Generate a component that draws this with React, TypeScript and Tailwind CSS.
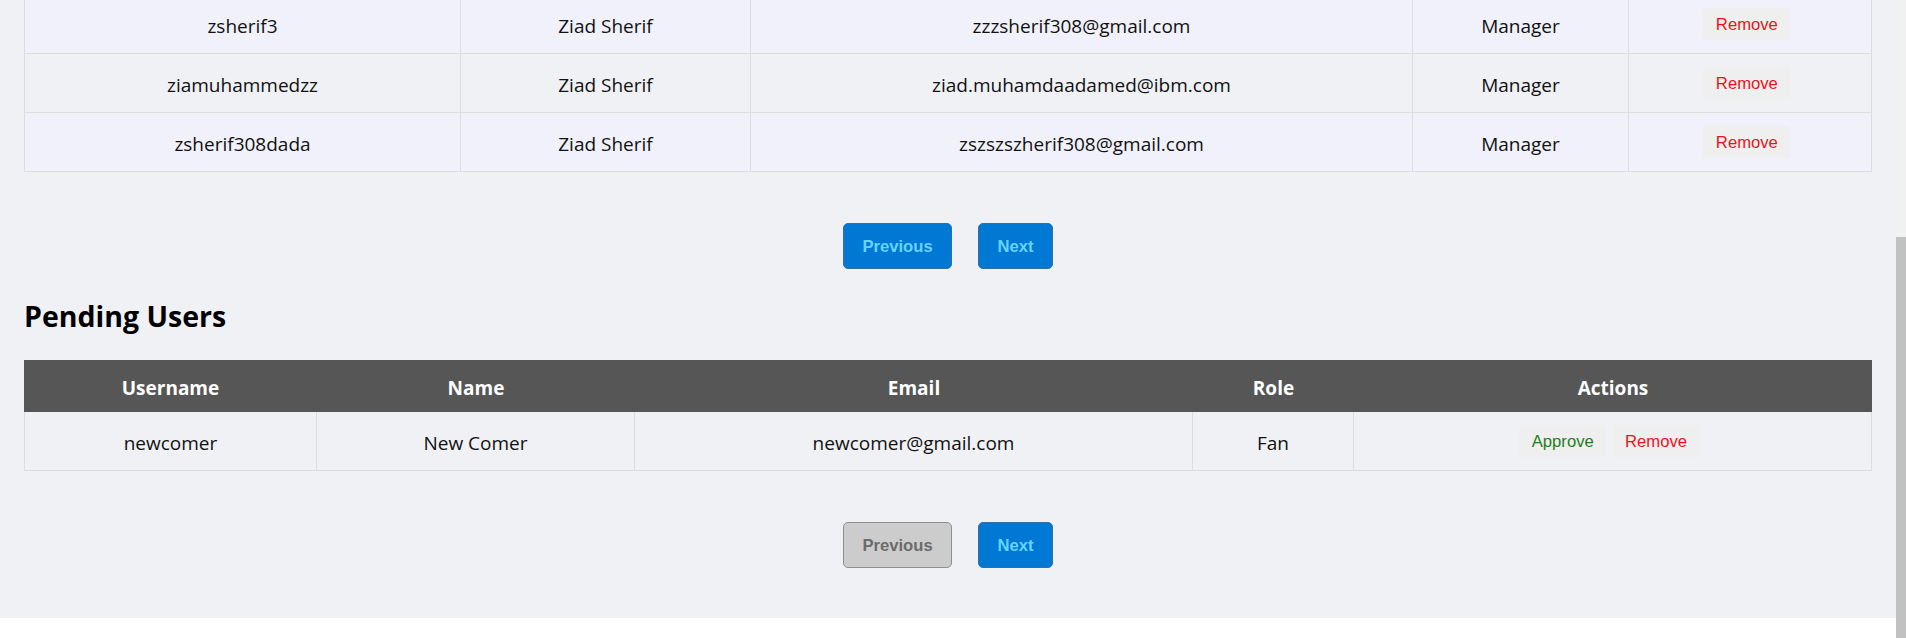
import React from "react";

const topRows = [
  { u: "zsherif3", n: "Ziad Sherif", e: "zzzsherif308@gmail.com", r: "Manager", striped: true },
  { u: "ziamuhammedzz", n: "Ziad Sherif", e: "ziad.muhamdaadamed@ibm.com", r: "Manager", striped: false },
  { u: "zsherif308dada", n: "Ziad Sherif", e: "zszszszherif308@gmail.com", r: "Manager", striped: true },
];

const cell = "flex items-center justify-center border-r border-[#dddddd]";
const textCell = "flex items-center justify-center border-r border-[#dddddd] pt-[5px]";
const headCell = "flex items-center justify-center pt-[4px]";

function ActionButton({ label, tone }: { label: string; tone: "red" | "green" }) {
  return (
    <button
      className={
        "h-[32px] px-[12.5px] mr-[6.25px] rounded-[3px] bg-[#efefef] text-[16.67px] leading-[19px] font-['Liberation_Sans',Arial,sans-serif] " +
        (tone === "red" ? "text-[#e8141a]" : "text-[#1e7d1e]")
      }
    >
      {label}
    </button>
  );
}

function Pagination({ prevDisabled }: { prevDisabled: boolean }) {
  return (
    <div className="flex justify-center gap-[26px] mt-[51px]">
      <button
        className={
          "h-[46px] px-[18.4px] rounded-[5px] border text-[16.67px] font-bold font-['Liberation_Sans',Arial,sans-serif] " +
          (prevDisabled
            ? "bg-[#cccccc] border-[#8f8f8f] text-[#6b6b6b]"
            : "bg-[#0078d4] border-[#336fa3] text-[#66d4ff]")
        }
      >
        Previous
      </button>
      <button className="h-[46px] px-[18.4px] rounded-[5px] border bg-[#0078d4] border-[#336fa3] text-[#66d4ff] text-[16.67px] font-bold font-['Liberation_Sans',Arial,sans-serif]">
        Next
      </button>
    </div>
  );
}

export default function App() {
  return (
    <div className="flex h-[638px] w-[1906px] overflow-hidden bg-white font-['Open_Sans',sans-serif]">
      <div className="flex-1 self-start bg-[#f0f1f5] px-[24px] pb-[50px]">
        {/* Users table (scrolled) */}
        <div className="-mt-[5px] border-l border-[#dddddd] text-[19px] text-[#111111]">
          {topRows.map((row) => (
            <div
              key={row.u}
              className={
                "grid grid-cols-[436px_290px_662px_216px_243px] h-[59px] border-b border-[#dddddd] " +
                (row.striped ? "bg-[#f0f1fa]" : "bg-[#f0f1f5]")
              }
            >
              <div className={textCell}>{row.u}</div>
              <div className={textCell}>{row.n}</div>
              <div className={textCell}>{row.e}</div>
              <div className={textCell}>{row.r}</div>
              <div className={cell}>
                <ActionButton label="Remove" tone="red" />
              </div>
            </div>
          ))}
        </div>

        <Pagination prevDisabled={false} />

        <h2 className="mt-[27px] text-[28.5px] leading-[40px] font-bold text-black">Pending Users</h2>

        <div className="mt-[24px] text-[19px] text-[#111111]">
          <div className="grid grid-cols-[293px_318px_558px_161px_518px] h-[52px] bg-[#565656] text-white font-bold text-[19px]">
            <div className={headCell}>Username</div>
            <div className={headCell}>Name</div>
            <div className={headCell}>Email</div>
            <div className={headCell}>Role</div>
            <div className={headCell}>Actions</div>
          </div>
          <div className="grid grid-cols-[292px_318px_558px_161px_518px] h-[59px] border-l border-b border-[#dddddd] bg-[#f0f1f5]">
            <div className={textCell}>newcomer</div>
            <div className={textCell}>New Comer</div>
            <div className={textCell}>newcomer@gmail.com</div>
            <div className={textCell}>Fan</div>
            <div className={cell}>
              <ActionButton label="Approve" tone="green" />
              <ActionButton label="Remove" tone="red" />
            </div>
          </div>
        </div>

        <Pagination prevDisabled={true} />
      </div>

      {/* scrollbar */}
      <div className="w-[10px] h-[638px] flex flex-col bg-[#f1f1f1]">
        <div className="h-[237px]" />
        <div className="flex-1 bg-[#c1c1c1]" />
      </div>
    </div>
  );
}
